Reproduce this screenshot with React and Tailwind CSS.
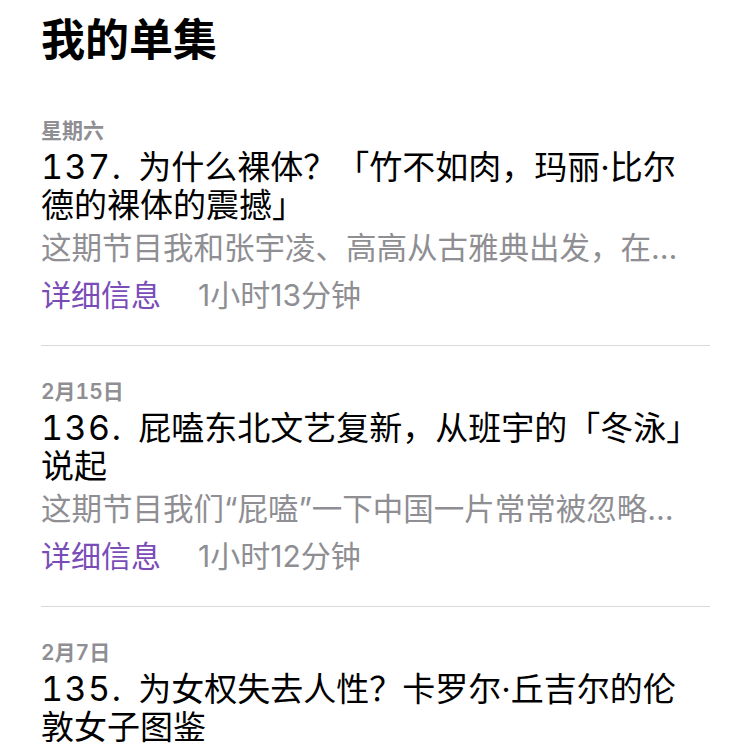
import React from 'react'

const episodes = [
  {
    date: '星期六',
    num: '137.',
    title: ['为什么裸体？「竹不如肉，玛丽·比尔', '德的裸体的震撼」'],
    desc: '这期节目我和张宇凌、高高从古雅典出发，在…',
    duration: '1小时13分钟',
  },
  {
    date: '2月15日',
    num: '136.',
    title: ['屁嗑东北文艺复新，从班宇的「冬泳」', '说起'],
    desc: '这期节目我们“屁嗑”一下中国一片常常被忽略…',
    duration: '1小时12分钟',
  },
  {
    date: '2月7日',
    num: '135.',
    title: ['为女权失去人性？卡罗尔·丘吉尔的伦', '敦女子图鉴'],
    desc: '',
    duration: '',
  },
]

const Episode = ({ ep, last }) => {
  return (
    <div className={`pt-[33px] ${last ? '' : 'pb-[31px] border-b border-[#d9d9d9]'}`}>
      <div className="text-[21px] leading-[26px] font-semibold text-[#8e8e93] tabular-nums">{ep.date}</div>
      <div className="mt-[4px] text-[33px] leading-[38px] text-black whitespace-nowrap">
        <span className="text-[34px] tabular-nums tracking-[1.5px] mr-[16px]">{ep.num}</span>
        {ep.title[0]}
        <br />
        {ep.title[1]}
      </div>
      {ep.desc && (
        <div className="mt-[5px] text-[30.5px] leading-[38px] text-[#8e8e93] whitespace-nowrap">{ep.desc}</div>
      )}
      {ep.duration && (
        <div className="mt-[9px] flex items-center gap-[37px] text-[30px] leading-[38px]">
          <span className="text-[#7a4cb8]">详细信息</span>
          <span className="text-[#8e8e93]">{ep.duration}</span>
        </div>
      )}
    </div>
  )
}

const App = () => {
  return (
    <div
      className="w-[750px] h-[750px] overflow-hidden bg-white pl-[41px] pr-[40px]"
      style={{ fontFamily: 'Inter, "Noto Sans CJK SC", sans-serif' }}
    >
      <h1 className="pt-[14px] text-[44px] leading-[52px] font-bold text-black">我的单集</h1>
      <div className="mt-[19px]">
        {episodes.map((ep, i) => (
          <Episode key={i} ep={ep} last={i === episodes.length - 1} />
        ))}
      </div>
    </div>
  )
}

export default App
